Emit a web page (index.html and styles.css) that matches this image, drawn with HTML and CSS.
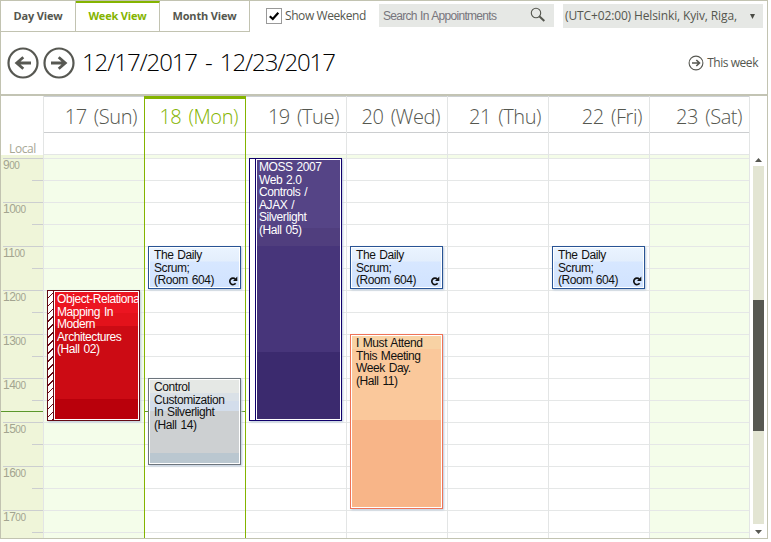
FILE: index.html
```html
<!DOCTYPE html>
<html lang="en">
<head>
<meta charset="utf-8">
<title>Scheduler</title>
<link rel="stylesheet" href="styles.css">
</head>
<body>
<div class="scheduler">
  <header class="toolbar">
    <div class="top-row">
      <nav class="tabs">
        <span class="tab tab-day">Day View</span>
        <span class="tab tab-week active">Week View</span>
        <span class="tab tab-month">Month View</span>
      </nav>
      <label class="weekend"><svg class="check" viewBox="0 0 16 16"><rect x=".5" y=".5" width="15" height="15" fill="#fff" stroke="#999"/><path d="M3.8 8.2L6.8 11L12.3 4.8" fill="none" stroke="#000" stroke-width="2.2"/></svg><span>Show Weekend</span></label>
      <div class="search"><span>Search In Appointments</span><svg viewBox="0 0 16 16"><circle cx="6" cy="6" r="4.7" fill="none" stroke="#55574f" stroke-width="1.1"/><path d="M9.3 9.3L14.3 14" stroke="#55574f" stroke-width="2"/></svg></div>
      <div class="zone"><span>(UTC+02:00) Helsinki, Kyiv, Riga,</span><svg viewBox="0 0 5 5"><path d="M0 0H5L2.5 5Z" fill="#4a4b45"/></svg></div>
    </div>
    <div class="nav-row">
      <svg class="arrow" viewBox="0 0 32 32"><circle cx="16" cy="16" r="14.5" fill="none" stroke="#575852" stroke-width="2.2"/><path d="M24 16H10M16.3 10.2L9.7 16L16.3 21.8" fill="none" stroke="#575852" stroke-width="2.8"/></svg>
      <svg class="arrow next" viewBox="0 0 32 32"><circle cx="16" cy="16" r="14.5" fill="none" stroke="#575852" stroke-width="2.2"/><path d="M8 16H22M15.7 10.2L22.3 16L15.7 21.8" fill="none" stroke="#575852" stroke-width="2.8"/></svg>
      <h1 class="range">12/17/2017 - 12/23/2017</h1>
      <div class="this-week"><svg viewBox="0 0 16 16"><circle cx="8" cy="8" r="6.9" fill="none" stroke="#575852" stroke-width="1.1"/><path d="M4 8H11M8.3 5L11.5 8L8.3 11" fill="none" stroke="#575852" stroke-width="1.6"/></svg><span>This week</span></div>
    </div>
  </header>
  <main class="calendar">
    <aside class="ruler">
      <div class="local">Local</div>
      <div class="hours">
        <div class="hour">9<small>00</small></div>
        <div class="hour">10<small>00</small></div>
        <div class="hour">11<small>00</small></div>
        <div class="hour">12<small>00</small></div>
        <div class="hour">13<small>00</small></div>
        <div class="hour">14<small>00</small></div>
        <div class="hour">15<small>00</small></div>
        <div class="hour">16<small>00</small></div>
        <div class="hour">17<small>00</small></div>
        <div class="now"></div>
      </div>
    </aside>
    <section class="day weekend-day">
      <h2>17 (Sun)</h2><div class="all-day"></div>
      <div class="slots"><article class="event red tall-1200"><i class="stripe hatch"></i><p>Object-Relational<br>Mapping In<br>Modern<br>Architectures<br>(Hall 02)</p></article></div>
    </section>
    <section class="day today">
      <h2>18 (Mon)</h2><div class="all-day"></div>
      <div class="slots"><article class="event blue at-1100"><p>The Daily<br>Scrum;<br>(Room 604)</p><svg class="repeat" viewBox="0 0 10 10"><path d="M7.3 3.1A3.2 3.2 0 1 0 7.6 7.2" fill="none" stroke="#111" stroke-width="1.7"/><path d="M9.3 .6V5H5Z" fill="#111"/></svg></article><article class="event gray at-1400"><p>Control<br>Customization<br>In Silverlight<br>(Hall 14)</p></article><div class="now"></div></div>
    </section>
    <section class="day after-today">
      <h2>19 (Tue)</h2><div class="all-day"></div>
      <div class="slots"><article class="event purple at-900"><i class="stripe"></i><p>MOSS 2007<br>Web 2.0<br>Controls /<br>AJAX /<br>Silverlight<br>(Hall 05)</p></article></div>
    </section>
    <section class="day">
      <h2>20 (Wed)</h2><div class="all-day"></div>
      <div class="slots"><article class="event blue at-1100"><p>The Daily<br>Scrum;<br>(Room 604)</p><svg class="repeat" viewBox="0 0 10 10"><path d="M7.3 3.1A3.2 3.2 0 1 0 7.6 7.2" fill="none" stroke="#111" stroke-width="1.7"/><path d="M9.3 .6V5H5Z" fill="#111"/></svg></article><article class="event orange at-1300"><p>I Must Attend<br>This Meeting<br>Week Day.<br>(Hall 11)</p></article></div>
    </section>
    <section class="day"><h2>21 (Thu)</h2><div class="all-day"></div><div class="slots"></div></section>
    <section class="day">
      <h2>22 (Fri)</h2><div class="all-day"></div>
      <div class="slots"><article class="event blue at-1100"><p>The Daily<br>Scrum;<br>(Room 604)</p><svg class="repeat" viewBox="0 0 10 10"><path d="M7.3 3.1A3.2 3.2 0 1 0 7.6 7.2" fill="none" stroke="#111" stroke-width="1.7"/><path d="M9.3 .6V5H5Z" fill="#111"/></svg></article></div>
    </section>
    <section class="day weekend-day"><h2>23 (Sat)</h2><div class="all-day"></div><div class="slots"></div></section>
    <div class="scroll">
      <svg viewBox="0 0 7 4"><path d="M0 4L3.5 0L7 4Z" fill="#575852"/></svg>
      <div class="track"><div class="thumb"></div></div>
      <svg viewBox="0 0 7 4"><path d="M0 0H7L3.5 4Z" fill="#575852"/></svg>
    </div>
  </main>
</div>
</body>
</html>
```
FILE: styles.css
```css
* { box-sizing: border-box; }
body { margin: 0; background: #fff; font-family: "Open Sans", "Noto Sans", sans-serif; color: #55574f; overflow: hidden; }
svg { display: block; flex: none; }
h1, h2, p { margin: 0; font-weight: 300; white-space: nowrap; }
.scheduler { width: 768px; height: 539px; border: 1px solid #c2c3b1; overflow: hidden; }

.toolbar { height: 95px; border-bottom: 2px solid #c3c4b4; }
.top-row { display: flex; height: 31px; }
.tabs { display: flex; height: 31px; border-bottom: 1px solid #c2c3b1; }
.tab { border-right: 1px solid #c2c3b1; font-size: 11px; font-weight: 700; letter-spacing: -.17px; line-height: 30px; text-align: center; white-space: nowrap; }
.tab-day { width: 75px; }
.tab-week { width: 84px; }
.tab-month { width: 90px; }
.tab.active { border-top: 2px solid #84b400; color: #84b400; line-height: 26px; }
.weekend { display: flex; margin: 7px 0 0 16px; width: 113px; height: 16px; font-size: 12px; letter-spacing: -.42px; line-height: 16px; white-space: nowrap; }
.check { width: 16px; height: 16px; margin-right: 3px; }
.search, .zone { display: flex; background: #e6e8e5; white-space: nowrap; }
.search { width: 175px; height: 23px; margin-top: 3px; padding: 0 8px 0 4px; justify-content: space-between; font: 12px/24px "Liberation Sans", sans-serif; letter-spacing: -.7px; word-spacing: .6px; color: #77757c; }
.search svg { width: 16px; height: 16px; margin-top: 3px; }
.zone { width: 200px; height: 24px; margin: 3px 0 0 9px; padding: 0 8px 0 2px; justify-content: space-between; font-size: 12px; letter-spacing: -.13px; line-height: 24px; }
.zone svg { width: 5px; height: 5px; margin-top: 10px; }
.nav-row { display: flex; align-items: center; height: 62px; padding: 0 9px 1px 6px; }
.arrow { width: 32px; height: 32px; }
.next { margin-left: 4px; }
.range { margin-left: 7px; font-size: 24px; letter-spacing: -1.1px; word-spacing: 3px; color: #000; line-height: 30px; padding-bottom: 1px; }
.this-week { display: flex; align-items: center; margin-left: auto; font-size: 12px; letter-spacing: -.45px; white-space: nowrap; }
.this-week svg { width: 16px; height: 16px; margin-right: 3px; }

.calendar { display: grid; grid-template-columns: 42px repeat(6, 101px) 101px 1fr; height: 442px; }
.local { height: 59px; padding: 44px 7px 0 0; font-size: 12px; letter-spacing: -.4px; line-height: 17px; text-align: right; color: #a7a895; }
.hours { height: 383px; padding-top: 3px; background: #eff5d9; overflow: hidden; position: relative; }
.hour { height: 44px; margin-left: 2px; border-top: 1px solid #ccced0; background: linear-gradient(#ccced0, #ccced0) right 21px / 11px 1px no-repeat; font: 12px/12px "Liberation Sans", sans-serif; letter-spacing: -.5px; color: #a3a490; }
.hour small { font-size: 10px; }

.day { display: grid; grid-template-rows: 37px 22px 383px; border-left: 1px solid #e3e5e5; }
.day h2 { padding-right: 7px; border-top: 1px solid #ccd0d3; border-bottom: 1px solid #ccced0; font-size: 20px; letter-spacing: -.45px; word-spacing: 2.5px; line-height: 40px; text-align: right; }
.all-day { border-bottom: 1px solid #e4e6e6; }
.slots { position: relative; display: grid; grid-template-rows: repeat(17, 22px); padding-top: 3px; overflow: visible; background: linear-gradient(#f4fce8, #f4fce8) 0 0 / 100% 3px no-repeat, repeating-linear-gradient(#e5e7e7 0 1px, transparent 1px 22px) 0 3px; }
.weekend-day .slots { background-color: #f4fdea; }
.day:nth-of-type(7) { border-right: 1px solid #e3e5e5; }
.today, .after-today { border-left-color: #84b400; }
.today h2 { border-top: 3px solid #84b400; color: #84b400; line-height: 36px; }
.now { position: absolute; left: 0; right: 0; top: 256px; height: 1px; background: #5b972b; }

.event { display: flex; position: relative; z-index: 1; grid-column: 1; width: 93px; margin: 0 0 1px 3px; border: 1px solid #285394; box-shadow: inset 0 0 0 1px #fff, 1px 1px 2px #b9c8da; overflow: hidden; color: #111; }
.event p { padding: 2px 0 0 5px; font: 12px/12.6px "Liberation Sans", sans-serif; letter-spacing: -.43px; word-spacing: 1px; }
.at-900 { grid-row: 1 / 13; }
.at-1100 { grid-row: 5 / 7; }
.tall-1200 { grid-row: 7 / 13; }
.at-1300 { grid-row: 9 / 17; }
.at-1400 { grid-row: 11 / 15; }
.stripe { flex: none; width: 6px; border-right: 1px solid #10006b; background: #fff; }
.blue { background: linear-gradient(#eaf4ff, #e3eefc 14px, #d7e7ff 15px, #d1e3ff); }
.repeat { position: absolute; right: 2px; bottom: 2px; width: 10px; height: 10px; }
.gray { border-color: #6c747c; background: linear-gradient(#e5e8e5 14px, #dae1e7 14px 22px, #d3ddeb 22px 32px, #cdd0d2 32px 74px, #bac7d0 74px); }
.red { border-color: #650b16; background: linear-gradient(#ec1521 22px, #e3121b 22px 35px, #cc0b14 35px 108px, #b9000b 108px); color: #fff; }
.red .stripe { border-color: #650b16; background: repeating-linear-gradient(135deg, #fff 0 4.4px, #650b16 4.4px 5.6px); }
.purple { border-color: #10006b; background: linear-gradient(#554486 69px, #503e7e 69px 87px, #47357a 87px 193px, #3b2a6e 193px); color: #fff; }
.red p, .purple p { flex: 1; padding-left: 3px; box-shadow: inset 0 0 0 1px #fff; overflow: hidden; }
.orange { border-color: #ef7357; background: linear-gradient(#f8d2a4 14px, #fac89b 14px 85px, #f8b588 85px); }

.scroll { display: flex; flex-direction: column; align-items: center; width: 11px; margin-left: 3px; padding-top: 62px; }
.scroll svg { width: 7px; height: 4px; }
.track { width: 11px; height: 358px; margin: 4px 0 6px; padding-top: 134px; background: #e3e5d3; }
.thumb { height: 131px; background: #575852; }
```
